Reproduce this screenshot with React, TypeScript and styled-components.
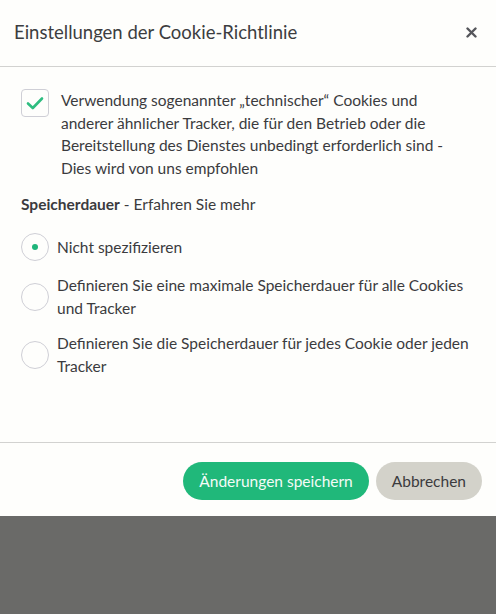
import styled, { createGlobalStyle } from 'styled-components';

const GlobalStyle = createGlobalStyle`
  html, body {
    margin: 0;
    padding: 0;
    background: #6a6a68;
  }
  * {
    box-sizing: border-box;
  }
`;

const options = [
  { label: 'Nicht spezifizieren', checked: true },
  { label: 'Definieren Sie eine maximale Speicherdauer für alle Cookies und Tracker', checked: false },
  { label: 'Definieren Sie die Speicherdauer für jedes Cookie oder jeden Tracker', checked: false },
];

export default function App() {
  return (
    <>
      <GlobalStyle />
      <Page>
        <Dialog>
          <Header>
            <Title>Einstellungen der Cookie-Richtlinie</Title>
            <Close type="button" aria-label="Schließen">
              <svg width="11" height="11" viewBox="0 0 11 11">
                <path d="M1.5 1.5 L9.5 9.5 M9.5 1.5 L1.5 9.5" stroke="#55565b" strokeWidth="2.4" strokeLinecap="round" />
              </svg>
            </Close>
          </Header>
          <Body>
            <CheckRow>
              <CheckBox>
                <svg width="18" height="14" viewBox="0 0 18 14">
                  <path d="M2 7.5 L6.8 12 L16 2.5" fill="none" stroke="#2ebd80" strokeWidth="2.6" strokeLinecap="round" strokeLinejoin="round" />
                </svg>
              </CheckBox>
              <CheckText>
                Verwendung sogenannter „technischer“ Cookies und anderer ähnlicher Tracker, die für den Betrieb oder die
                Bereitstellung des Dienstes unbedingt erforderlich sind - Dies wird von uns empfohlen
              </CheckText>
            </CheckRow>
            <Section>
              <strong>Speicherdauer</strong> - Erfahren Sie mehr
            </Section>
            <RadioList>
              {options.map((o) => (
                <RadioRow key={o.label}>
                  <Radio>{o.checked && <Dot />}</Radio>
                  <Text>{o.label}</Text>
                </RadioRow>
              ))}
            </RadioList>
          </Body>
          <Footer>
            <PrimaryButton type="button">Änderungen speichern</PrimaryButton>
            <SecondaryButton type="button">Abbrechen</SecondaryButton>
          </Footer>
        </Dialog>
      </Page>
    </>
  );
}

const Page = styled.div`
  min-height: 614px;
  background: #6a6a68;
  font-family: Lato, 'Liberation Sans', sans-serif;
  color: #3b3b3b;
`;

const Dialog = styled.div`
  width: 496px;
  height: 516px;
  background: #fefefc;
  display: flex;
  flex-direction: column;
`;

const Header = styled.div`
  height: 67px;
  padding: 0 19px 2px 14px;
  display: flex;
  align-items: center;
  justify-content: space-between;
  border-bottom: 1px solid #d2d2d0;
`;

const Title = styled.h1`
  margin: 0;
  font-size: 18.5px;
  font-weight: 400;
  color: #3c3d40;
`;

const Close = styled.button`
  border: none;
  background: transparent;
  padding: 0;
  display: flex;
  cursor: pointer;
`;

const Body = styled.div`
  flex: 1;
  padding: 22px 20px 0 21px;
  border-bottom: 1px solid #d2d2d0;
`;

const CheckRow = styled.div`
  display: flex;
  align-items: flex-start;
  gap: 12px;
`;

const CheckBox = styled.div`
  flex: none;
  width: 28px;
  height: 28px;
  border: 1px solid #cfcfd6;
  border-radius: 4px;
  display: flex;
  align-items: center;
  justify-content: center;
`;

const Text = styled.p`
  margin: 0;
  font-size: 15.5px;
  line-height: 22.5px;
  color: #3b3b3e;
`;

const CheckText = styled(Text)`
  max-width: 384px;
`;

const Section = styled.div`
  margin-top: 14px;
  font-size: 15.5px;
  line-height: 22px;
  color: #3b3b3e;

  strong {
    font-weight: 700;
  }
`;

const RadioList = styled.div`
  margin-top: 18px;
  display: flex;
  flex-direction: column;
  gap: 13px;
`;

const RadioRow = styled.div`
  display: flex;
  align-items: center;
  gap: 8px;
`;

const Radio = styled.div`
  flex: none;
  width: 28px;
  height: 28px;
  border: 1px solid #cfcfd6;
  border-radius: 50%;
  display: flex;
  align-items: center;
  justify-content: center;
`;

const Dot = styled.span`
  width: 6px;
  height: 6px;
  border-radius: 50%;
  background: #1fb57a;
`;

const Footer = styled.div`
  height: 73px;
  padding: 2px 14px 0 0;
  display: flex;
  align-items: center;
  justify-content: flex-end;
  gap: 7px;
`;

const PrimaryButton = styled.button`
  height: 38px;
  padding: 0 16px;
  border: none;
  border-radius: 19px;
  background: #20b87a;
  color: #f4fbf7;
  font-family: inherit;
  font-size: 15.5px;
  cursor: pointer;
`;

const SecondaryButton = styled.button`
  height: 38px;
  padding: 0 16px;
  border: none;
  border-radius: 19px;
  background: #d3d2ca;
  color: #3b3b3e;
  font-family: inherit;
  font-size: 15.5px;
  cursor: pointer;
`;
